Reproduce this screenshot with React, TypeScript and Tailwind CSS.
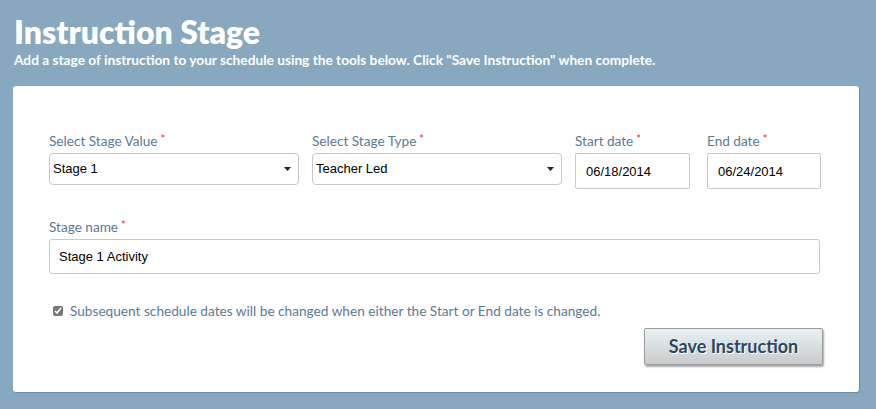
import React, { useState } from "react";

const sans = { fontFamily: "Lato, 'Open Sans', sans-serif" };

function Label({ text }: { text: string }) {
  return (
    <label className="block text-[13.6px] leading-4 text-[#5b7a94] mb-[4px]" style={sans}>
      {text}
      <span className="text-[#e52b2b] ml-[3px] text-[11px] align-top leading-3">*</span>
    </label>
  );
}

function FakeSelect({ value, width }: { value: string; width: string }) {
  return (
    <div
      className={`${width} h-[32px] border border-[#c8c8c8] rounded-[4px] bg-white flex items-center justify-between pl-[3px] pr-[7px] text-[13px] text-black font-['Liberation_Sans',Arial,sans-serif]`}
    >
      <span>{value}</span>
      <svg width="7" height="4" viewBox="0 0 7 4">
        <path d="M0 0 L7 0 L3.5 4 Z" fill="#222" />
      </svg>
    </div>
  );
}

export default function App() {
  const [checked, setChecked] = useState(true);

  return (
    <div className="w-full h-[409px] bg-[#87a8bf] px-[13px] pt-[13px] overflow-hidden">
      <h1
        className="text-[32px] leading-[38px] font-extrabold text-white pl-[1px]"
        style={sans}
      >
        Instruction Stage
      </h1>
      <p className="text-[13.7px] leading-4 font-bold text-white pl-[1px] mt-[1px]" style={sans}>
        Add a stage of instruction to your schedule using the tools below. Click "Save
        Instruction" when complete.
      </p>

      <div className="mt-[18px] w-[846px] h-[306px] bg-white rounded-[3px] shadow-[1px_1px_1px_rgba(60,80,100,0.35)] pl-[36px] pr-[36px] pt-[47px]">
        <div className="flex items-start">
          <div className="mr-[13px]">
            <Label text="Select Stage Value" />
            <FakeSelect value="Stage 1" width="w-[250px]" />
          </div>
          <div className="mr-[13px]">
            <Label text="Select Stage Type" />
            <FakeSelect value="Teacher Led" width="w-[250px]" />
          </div>
          <div className="mr-[17px]">
            <Label text="Start date" />
            <input
              readOnly
              value="06/18/2014"
              className="w-[115px] h-[36px] border border-[#c8c8c8] rounded-[2px] pl-[10px] text-[13px] text-black outline-none font-['Liberation_Sans',Arial,sans-serif]"
            />
          </div>
          <div>
            <Label text="End date" />
            <input
              readOnly
              value="06/24/2014"
              className="w-[114px] h-[36px] border border-[#c8c8c8] rounded-[2px] pl-[10px] text-[13px] text-black outline-none font-['Liberation_Sans',Arial,sans-serif]"
            />
          </div>
        </div>

        <div className="mt-[30px]">
          <Label text="Stage name" />
          <input
            readOnly
            value="Stage 1 Activity"
            className="w-[771px] h-[35px] border border-[#c8c8c8] rounded-[3px] pl-[9px] text-[13px] text-black outline-none font-['Liberation_Sans',Arial,sans-serif]"
          />
        </div>

        <label className="flex items-center mt-[29px] ml-[4px] cursor-pointer">
          <input
            type="checkbox"
            checked={checked}
            onChange={() => setChecked(!checked)}
            className="w-[10px] h-[10px] m-0 accent-[#777]"
          />
          <span className="ml-[7px] text-[13.65px] leading-4 text-[#5b7a94]" style={sans}>
            Subsequent schedule dates will be changed when either the Start or End date is
            changed.
          </span>
        </label>

        <div className="flex justify-end mt-[9px]">
          <button
            className="w-[179px] h-[37px] border border-[#9a9a9a] rounded-[2px] bg-gradient-to-b from-[#e8f2f4] to-[#c9cbcc] shadow-[1px_2px_2px_rgba(0,0,0,0.35)] text-[18px] font-bold text-[#2b4660] [text-shadow:1px_1px_0_#fff]"
            style={sans}
          >
            Save Instruction
          </button>
        </div>
      </div>
    </div>
  );
}
